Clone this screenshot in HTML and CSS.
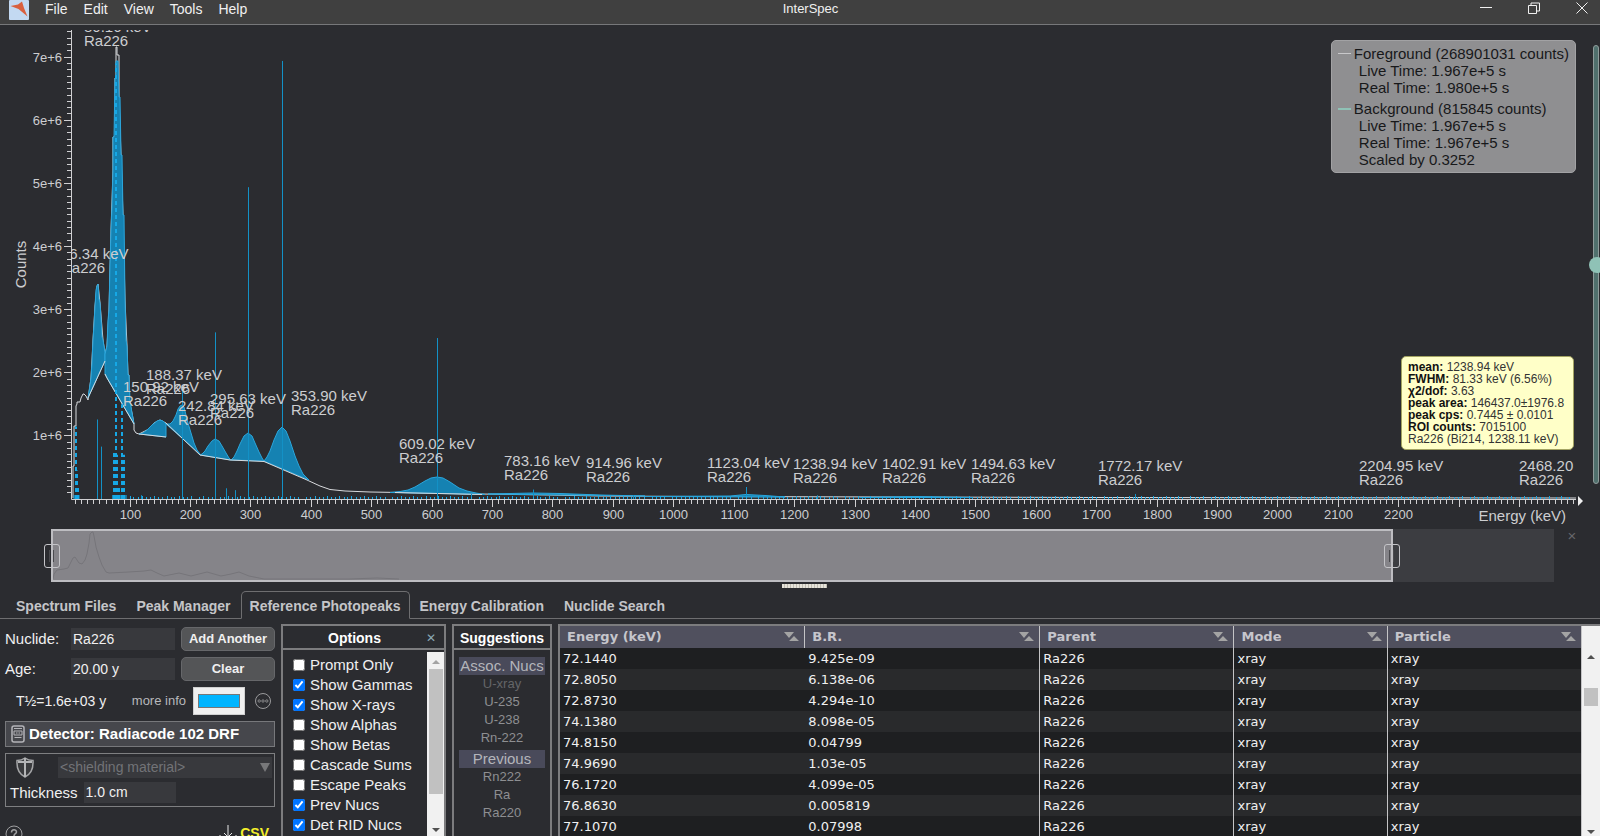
FILE: index.html
```html
<!DOCTYPE html>
<html lang="en">
  <head>
    <meta charset="UTF-8" />
    <meta name="viewport" content="width=device-width, initial-scale=1.0" />
    <title>InterSpec</title>
    <link rel="stylesheet" href="styles.css">
  </head>
  <body>
    <header class="menubar">
      <svg class="logo" viewBox="0 0 20 20" width="20" height="20">
        <rect width="20" height="20" rx="1" fill="#c3d9f2" />
        <path d="M1.500 6L9 4.500L13 1.500L15 8L18.500 16.500L9.500 9Z" fill="#d9603f" />
      </svg>
      <nav class="menu">
        <button>File</button>
        <button>Edit</button>
        <button>View</button>
        <button>Tools</button>
        <button>Help</button>
      </nav>
      <div class="app-title">InterSpec</div>
      <div class="window-buttons">
        <button aria-label="Minimize">
          <svg width="12" height="12" viewBox="0 0 12 12"><path d="M0 5.500H12" /></svg>
        </button>
        <button aria-label="Restore">
          <svg width="12" height="12" viewBox="0 0 12 12">
            <path d="M0.500 3.500H8.500V11.500H0.500ZM3 3V1H11.500V9H9" />
          </svg>
        </button>
        <button aria-label="Close">
          <svg width="12" height="12" viewBox="0 0 12 12"><path d="M0.500 0.500L11.500 11.500M11.500 0.500L0.500 11.500" /></svg>
        </button>
      </div>
    </header>

    <section class="chart">
      <svg id="axes" class="axes">
        <g id="ticks" class="ticks"></g>
        <svg id="plot">
          <svg id="data" viewBox="72 30 1504 469" preserveAspectRatio="none">
            <!-- continuum and raw spectrum -->
            <path class="spectrum" d="M73 498V466H74V426H76V406L77 404V402H80L81 398L83 394H84L86 396L88 400L91 378L93 340L95 306L97 286L98 284L100 303L103 340L105 354L107 346L109 310L111 230L113 170V137H115V78H116V47H117V55H119V97L121 155L123 215L125 300L127 346L128 375H129V400L132 413L134 424V430L136 433L139 434L147 430L154 423L160 420L166 423" />
            <path class="spectrum" d="M307 480L320 486L330 489.500L345 491L370 492L400 492.500L480 494L550 495L600 496L700 496.500L900 497L1100 497.500L1576 498" />
            <!-- fitted peaks -->
            <path class="peak" d="M88 398L91 378L92 363L93 340L94 325L95 306L96 290L97 286L98 284L99 299L100 303L101 318L102 337L103 340L105 352V361Z" />
            <path class="peak" d="M105 374V354L107 346L108 320L109 310L110 265L111 230L112 207L113 170V137H114L115 78H116V61H118L119 97H120L121 155H122L123 215H124L125 300L126 340L127 346L128 375H129L130 400L132 413L134 424L107 378Z" />
            <path class="peak" d="M139 434L143 433L147 430L152 425L157 421L160 420L163 421L166 424V437Z" />
            <path class="peak" d="M166 424H170L173 421L176 415L178 409L180 406L182 405L184 407L186 415L188 423L191 433L194 443L197 450L200 454Z" />
            <path class="peak" d="M200 455L202 454L205 451L208 446L212 441L215 439L219 441L222 446L226 453L229 458L231 460Z" />
            <path class="peak" d="M231 460L234 457L237 451L240 444L244 436L248 433L252 436L255 443L259 452L262 458L264 461Z" />
            <path class="peak" d="M264 461L267 457L270 451L274 440L278 431L282 427L286 431L290 441L295 456L299 466L303 474L309 480Z" />
            <path class="peak" d="M390 492.500L400 491.500L408 490L415 487L425 481L431 478L437 477L443 478L450 482L459 488L467 491L476 493L485 494.500Z" />
            <path class="peak" d="M488 494L533 493L560 493.500L600 495L645 496Z" />
            <path class="peak" d="M645 496.500L730 496L746 494.500L765 495.500L785 497Z" />
            <path class="peak" d="M860 497.500L917 496.500L972 497.500Z" />
            <!-- baseline under each region of interest -->
            <path class="baseline" d="M88 398L105 361M105 374L107 378L134 424M139 434L166 437M166 423L200 455L230 460L264 461.500L307 480M395 492.500L482 494.500" />
          </svg>
          <g id="lines"></g>
          <g id="labels" class="peak-labels"></g>
        </svg>
        <path id="arrow" fill="#f0f0f0" d="M0 -5L5 0L0 5Z" />
      </svg>

      <div class="legend">
        <div class="legend-item">
          <div class="legend-name"><span class="swatch"></span>Foreground (268901031 counts)</div>
          <div>Live Time: 1.967e+5 s</div>
          <div>Real Time: 1.980e+5 s</div>
        </div>
        <div class="legend-item">
          <div class="legend-name"><span class="swatch swatch-bg"></span>Background (815845 counts)</div>
          <div>Live Time: 1.967e+5 s</div>
          <div>Real Time: 1.967e+5 s</div>
          <div>Scaled by 0.3252</div>
        </div>
      </div>

      <div class="peak-info">
        <div><b>mean:</b> 1238.94 keV</div>
        <div><b>FWHM:</b> 81.33 keV (6.56%)</div>
        <div><b>χ2/dof:</b> 3.63</div>
        <div><b>peak area:</b> 146437.0±1976.8</div>
        <div><b>peak cps:</b> 0.7445 ± 0.0101</div>
        <div><b>ROI counts:</b> 7015100</div>
        <div>Ra226 (Bi214, 1238.11 keV)</div>
      </div>

      <div class="scaler"><span class="scaler-knob"></span></div>
    </section>

    <section class="overview">
      <div class="overview-track">
        <div class="overview-window">
          <svg width="400" height="49" viewBox="54 532 400 49">
            <path d="M54 580L55 575L58 571L65 570L69 569L72 563L74 559L76 558L78 561L80 564L83 565L86 561L88 555L90 544L91 535L93 533L94 533L95 537L97 548L100 558L103 566L107 573L110 574L130 573L145 572L152 571L158 574L165 577L180 574L192 577L208 573L222 577L232 575L240 573L250 577L265 580L350 580L378 579L400 580" />
          </svg>
          <span class="handle handle-left"></span>
          <span class="handle handle-right"></span>
        </div>
      </div>
      <button class="overview-close" aria-label="Hide overview">×</button>
    </section>

    <div class="splitter"><span></span></div>

    <nav class="tabs">
      <button>Spectrum Files</button>
      <button>Peak Manager</button>
      <button class="active">Reference Photopeaks</button>
      <button>Energy Calibration</button>
      <button>Nuclide Search</button>
    </nav>

    <main class="tools">
      <form class="source">
        <div class="field">
          <label for="nuclide">Nuclide:</label>
          <input id="nuclide" type="text" value="Ra226" />
          <button type="button">Add Another</button>
        </div>
        <div class="field">
          <label for="age">Age:</label>
          <input id="age" type="text" value="20.00 y" />
          <button type="button">Clear</button>
        </div>
        <div class="half-life">
          <span class="half-life-value">T½=1.6e+03 y</span>
          <a href="#">more info</a>
          <input type="color" value="#00b5ff" aria-label="Line color" />
          <button type="button" class="more" aria-label="More options">
            <svg width="18" height="18" viewBox="0 0 18 18" fill="none" stroke="#9a9a9c">
              <circle cx="9" cy="9" r="7.500" />
              <g stroke-width="0.800">
                <circle cx="5.200" cy="9" r="1.200" />
                <circle cx="9" cy="9" r="1.200" />
                <circle cx="12.800" cy="9" r="1.200" />
              </g>
            </svg>
          </button>
        </div>
        <button type="button" class="detector">
          <svg width="14" height="18" viewBox="0 0 14 18" fill="none" stroke="#b4b4b8">
            <rect x="1" y="1" width="12" height="16" rx="2" stroke-width="1.500" />
            <path d="M3 3.500H11M3.500 12.500H10.500" />
            <path d="M3 6H11V10H3ZM5 8H6.500M7.500 8H9" />
          </svg>
          Detector: Radiacode 102 DRF
        </button>
        <div class="shielding">
          <div class="shielding-row">
            <svg width="18" height="21" viewBox="0 0 18 21">
              <path d="M9 1C11 2.500 14 3.500 17 3.500C17.500 11 15 17 9 20C3 17 0.500 11 1 3.500C4 3.500 7 2.500 9 1Z" fill="#3a3b3e" stroke="#a4a5a7" stroke-width="1.500" />
              <path d="M9 1V20M2 5H16" stroke="#b4b5b7" stroke-width="2" />
            </svg>
            <div class="select">
              <select aria-label="Shielding material">
                <option>&lt;shielding material&gt;</option>
              </select>
            </div>
          </div>
          <div class="thickness-row">
            <label for="thickness">Thickness</label>
            <input id="thickness" type="text" value="1.0 cm" />
          </div>
        </div>
        <div class="source-footer">
          <button type="button" aria-label="Help">
            <svg width="18" height="18" viewBox="0 0 18 18" fill="none" stroke="#a0a0a2">
              <circle cx="9" cy="9" r="8" />
              <path d="M6.500 7.500C6.500 4 11.500 4 11.500 7C11.500 9 9 8.500 9 11M9 12.500V14" stroke-width="1.500" />
            </svg>
          </button>
          <a class="csv" href="#">
            <svg width="18" height="18" viewBox="0 0 18 18" fill="none" stroke="#e8e8e8">
              <path d="M9 0V12M5 8L9 12L13 8M1 10V15H17V10" />
            </svg>
            CSV
          </a>
        </div>
      </form>

      <section class="panel options">
        <header>
          <h2>Options</h2>
          <button aria-label="Close options">✕</button>
        </header>
        <div class="options-body">
          <div class="checks">
            <label><input type="checkbox" />Prompt Only</label>
            <label><input type="checkbox" checked />Show Gammas</label>
            <label><input type="checkbox" checked />Show X-rays</label>
            <label><input type="checkbox" />Show Alphas</label>
            <label><input type="checkbox" />Show Betas</label>
            <label><input type="checkbox" />Cascade Sums</label>
            <label><input type="checkbox" />Escape Peaks</label>
            <label><input type="checkbox" checked />Prev Nucs</label>
            <label><input type="checkbox" checked />Det RID Nucs</label>
          </div>
          <div class="scrollbar options-scroll">
            <span class="arrow-up dim"></span>
            <span class="thumb"></span>
            <span class="arrow-down"></span>
          </div>
        </div>
      </section>

      <section class="panel suggestions">
        <header><h2>Suggestions</h2></header>
        <div class="nuclides">
          <h3>Assoc. Nucs</h3>
          <a href="#" class="faint">U-xray</a>
          <a href="#">U-235</a>
          <a href="#">U-238</a>
          <a href="#">Rn-222</a>
          <h3>Previous</h3>
          <a href="#">Rn222</a>
          <a href="#">Ra</a>
          <a href="#">Ra220</a>
        </div>
      </section>

      <section class="lines-view">
        <table>
          <colgroup>
            <col class="col-energy" />
            <col class="col-br" />
            <col class="col-parent" />
            <col class="col-mode" />
            <col class="col-particle" />
          </colgroup>
          <thead>
            <tr>
              <th>Energy (keV)</th>
              <th>B.R.</th>
              <th>Parent</th>
              <th>Mode</th>
              <th>Particle</th>
            </tr>
          </thead>
          <tbody>
            <tr><td>72.1440</td><td>9.425e-09</td><td>Ra226</td><td>xray</td><td>xray</td></tr>
            <tr><td>72.8050</td><td>6.138e-06</td><td>Ra226</td><td>xray</td><td>xray</td></tr>
            <tr><td>72.8730</td><td>4.294e-10</td><td>Ra226</td><td>xray</td><td>xray</td></tr>
            <tr><td>74.1380</td><td>8.098e-05</td><td>Ra226</td><td>xray</td><td>xray</td></tr>
            <tr><td>74.8150</td><td>0.04799</td><td>Ra226</td><td>xray</td><td>xray</td></tr>
            <tr><td>74.9690</td><td>1.03e-05</td><td>Ra226</td><td>xray</td><td>xray</td></tr>
            <tr><td>76.1720</td><td>4.099e-05</td><td>Ra226</td><td>xray</td><td>xray</td></tr>
            <tr><td>76.8630</td><td>0.005819</td><td>Ra226</td><td>xray</td><td>xray</td></tr>
            <tr><td>77.1070</td><td>0.07998</td><td>Ra226</td><td>xray</td><td>xray</td></tr>
          </tbody>
        </table>
        <div class="scrollbar table-scroll">
          <span class="arrow-up"></span>
          <span class="thumb"></span>
          <span class="arrow-down"></span>
        </div>
      </section>
    </main>

    <script src="chart.js"></script>
  </body>
</html>
```
FILE: styles.css
```css
* {
  box-sizing: border-box;
}

body {
  margin: 0;
  height: 100vh;
  overflow: hidden;
  display: flex;
  flex-direction: column;
  background-color: #2b2c30;
  color: #f0f0f0;
  font-family: "Liberation Sans", Arial, sans-serif;
  font-size: 15px;
}

button {
  font: inherit;
  color: inherit;
  background: none;
  border: none;
  padding: 0;
  cursor: pointer;
}

a {
  color: inherit;
  text-decoration: none;
}

/* Menu bar */
.menubar {
  display: flex;
  height: 25px;
  flex: none;
  background-color: #404040;
  border-bottom: 1px solid #77787a;
  padding-left: 9px;
}

.menu {
  display: flex;
  flex: 1 0 0;
  gap: 16px;
  padding-left: 16px;
  height: 18px;
}

.menu button {
  font-size: 14px;
}

.app-title {
  font-size: 13px;
  line-height: 18px;
}

.window-buttons {
  display: flex;
  flex: 1 0 24px;
  justify-content: flex-end;
  gap: 36px;
  padding-right: 12px;
  height: 16px;
}

.window-buttons svg {
  display: block;
  fill: none;
  stroke: #f0f0f0;
}

/* Spectrum chart */
.chart {
  position: relative;
  flex: 0 0 60vh;
}

.axes {
  display: block;
  width: 100%;
  height: 100%;
}

.ticks path {
  stroke: #d0d0d2;
  fill: none;
}

.ticks text {
  fill: #cdced0;
  font-size: 13px;
}

.ticks .axis-title,
.peak-labels text {
  fill: #cdced0;
  font-size: 15px;
}

#data path {
  vector-effect: non-scaling-stroke;
}

.spectrum,
.baseline {
  fill: none;
  stroke: #d8dadd;
}

.peak {
  fill: #1582b2;
  stroke: #2aa6dc;
}

.gamma {
  stroke: #1391c6;
}

.xray {
  stroke: #16a8e6;
  stroke-width: 2;
  stroke-dasharray: 4 3;
}

.weak {
  stroke: #16a8e6;
}

.legend {
  position: absolute;
  top: 15px;
  right: 24px;
  padding: 4px 6px;
  background-color: #8f8f91;
  border: 1px solid #a2a2a4;
  border-radius: 5px;
  color: #17181a;
  line-height: 17px;
}

.legend-item {
  padding-left: 21px;
}

.legend-item + .legend-item {
  margin-top: 4px;
}

.legend-name {
  display: flex;
  align-items: center;
  margin-left: -21px;
}

.swatch {
  width: 13px;
  height: 1px;
  margin-right: 3px;
  background-color: #c8c8ca;
}

.swatch-bg {
  height: 2px;
  background-color: #8fc2b6;
}

.peak-info {
  position: absolute;
  right: 26px;
  bottom: 77px;
  width: 173px;
  padding: 4px 6px;
  background-color: #ffffc8;
  border: 1px solid #a3a362;
  border-radius: 5px;
  color: #333;
  font-size: 12px;
  line-height: 12px;
}

.peak-info b {
  color: #111;
}

.scaler {
  position: absolute;
  top: 20px;
  right: 1px;
  bottom: 43px;
  width: 6px;
  background-color: #50706d;
  border: 1px solid #8f9c9b;
  border-radius: 3px;
}

.scaler-knob {
  position: absolute;
  top: 50%;
  left: -5px;
  width: 16px;
  height: 16px;
  margin-top: -7px;
  border-radius: 50%;
  background-color: #8fc2b6;
}

/* Overview strip */
.overview {
  display: flex;
  flex: none;
  align-items: flex-start;
  padding: 2px 20px 0 51px;
}

.overview-track {
  flex: 1;
  height: 53px;
  background-color: #3c3d41;
}

.overview-window {
  position: relative;
  width: 89.3%;
  height: 53px;
  background-color: #858489;
  border: 2px solid #bdbdc1;
}

.overview-window svg {
  display: block;
  fill: none;
  stroke: #76757a;
}

.handle {
  position: absolute;
  top: 13px;
  width: 16px;
  height: 24px;
  border: 1px solid #c4c4c8;
  border-radius: 3px;
  background: linear-gradient(90deg, transparent 4px, #4a4a4e 4px 5px, transparent 5px 8px, #4a4a4e 8px 9px, transparent 9px) no-repeat 0 5px / 100% 12px;
}

.handle-left {
  left: -9px;
}

.handle-right {
  right: -9px;
}

.overview-close {
  width: 26px;
  padding-left: 10px;
  color: #66676b;
  line-height: 14px;
}

/* Splitter */
.splitter {
  flex: none;
  height: 9px;
  padding: 2px 0 0 8px;
}

.splitter span {
  display: block;
  width: 45px;
  height: 4px;
  margin: 0 auto;
  background: repeating-linear-gradient(90deg, #e6e3da 0 2px, #bfbcb2 2px 3px);
}

/* Tabs */
.tabs {
  display: flex;
  flex: none;
  height: 28px;
}

.tabs::before,
.tabs::after {
  content: "";
  width: 6px;
  border-bottom: 1px solid #6e6e70;
}

.tabs::after {
  flex: 1;
}

.tabs button {
  padding: 3px 10px 0;
  border-bottom: 1px solid #6e6e70;
  color: #c4c5c8;
  font-size: 14px;
  font-weight: bold;
}

.tabs .active {
  padding: 3px 8px 0;
  border: 1px solid #6e6e70;
  border-bottom-color: transparent;
  border-radius: 5px 5px 0 0;
}

/* Tool area */
.tools {
  display: flex;
  flex: 1;
  min-height: 0;
  gap: 6px;
  padding: 5px 0 0 5px;
}

.source {
  display: flex;
  flex-direction: column;
  flex: 0 0 270px;
  gap: 6px;
  padding-top: 3px;
}

.source input[type="text"] {
  width: 100%;
  min-width: 0;
  padding: 0 2px;
  border: none;
  background-color: #38393d;
  color: #f0f0f0;
  font: inherit;
  font-size: 14px;
}

.field {
  display: grid;
  grid-template-columns: 60px 1fr 94px;
  gap: 6px;
  align-items: center;
  height: 24px;
}

.field input[type="text"] {
  height: 22px;
}

.field button {
  height: 24px;
  border: 1px solid #66676a;
  border-radius: 5px;
  background-color: #545557;
  font-size: 13px;
  font-weight: bold;
}

.half-life {
  display: flex;
  align-items: center;
  height: 28px;
  padding-left: 11px;
}

.half-life-value {
  flex: 1;
  font-size: 14px;
}

.half-life a {
  color: #b8b9bc;
  font-size: 13px;
}

.half-life input[type="color"] {
  width: 52px;
  height: 28px;
  margin: 0 9px 0 7px;
  padding: 2px;
  border: 1px solid #d0d0d0;
  background-color: #f0f0f0;
}

.more {
  height: 18px;
  margin-right: 3px;
}

.more svg {
  display: block;
}

.detector {
  display: flex;
  flex: none;
  align-items: center;
  gap: 4px;
  height: 26px;
  padding-left: 5px;
  border: 1px solid #77787b;
  background-color: #46474c;
  color: #fff;
  font-weight: bold;
}

.shielding {
  height: 56px;
  padding: 3px 2px 3px 4px;
  border: 1px solid #7e7f81;
}

.shielding-row {
  display: flex;
  align-items: center;
  gap: 24px;
  height: 21px;
  margin-bottom: 4px;
  padding-left: 6px;
}

.select {
  position: relative;
  flex: 1;
}

.select::after {
  content: "";
  position: absolute;
  right: 2px;
  top: 6px;
  border: 5px solid transparent;
  border-top: 9px solid #77787a;
  border-bottom: none;
}

.select select {
  display: block;
  width: 100%;
  height: 21px;
  padding: 0 2px;
  appearance: none;
  border: none;
  background-color: #38393d;
  color: #727377;
  font: inherit;
  font-size: 14px;
}

.thickness-row {
  display: flex;
  align-items: center;
  gap: 6px;
}

.thickness-row input[type="text"] {
  width: 92px;
  height: 21px;
}

.source-footer {
  display: flex;
  justify-content: space-between;
  padding: 12px 6px 0 0;
}

.csv {
  display: flex;
  gap: 3px;
  color: #f5f02a;
  font-size: 14px;
  font-weight: bold;
}

/* Bordered panels */
.panel {
  border: 2px solid #7c7c7e;
  border-bottom: none;
  overflow: hidden;
}

.panel header {
  display: flex;
  align-items: center;
  height: 24px;
  padding-top: 2px;
  border-bottom: 2px solid #7c7c7e;
}

.panel h2 {
  flex: 1;
  margin: 0;
  color: #fff;
  font-size: 14px;
  text-align: center;
}

.options {
  flex: 0 0 165px;
}

.options header {
  padding-right: 8px;
}

.options header button {
  color: #8aa7b5;
  font-size: 12px;
}

.options-body {
  display: flex;
  height: 100%;
}

.checks {
  flex: 1;
  padding: 5px 0 0 10px;
}

.checks label {
  display: flex;
  align-items: center;
  gap: 5px;
  height: 20px;
  white-space: nowrap;
}

.checks input {
  width: 12px;
  height: 12px;
  margin: 0;
}

.scrollbar {
  display: flex;
  flex-direction: column;
  align-items: center;
  flex: 0 0 17px;
  background-color: #f1f1f1;
}

.scrollbar .thumb {
  width: 14px;
  background-color: #c1c1c1;
}

.arrow-up,
.arrow-down {
  border: 4px solid transparent;
}

.arrow-up {
  border-top: none;
  border-bottom-color: #505050;
}

.arrow-down {
  border-bottom: none;
  border-top-color: #505050;
}

.dim {
  border-bottom-color: #a3a3a3;
}

.options-scroll {
  height: 184px;
  margin-top: 2px;
  padding: 8px 0 4px;
}

.options-scroll .thumb {
  height: 125px;
  margin: 5px 0 34px;
}

.suggestions {
  flex: 0 0 100px;
  text-align: center;
}

.nuclides {
  padding: 4px 5px 0;
}

.nuclides h3 {
  margin: 3px 0 0;
  background-color: #494a5a;
  color: #b4b5ba;
  font-size: 15px;
  font-weight: normal;
  line-height: 18px;
}

.nuclides a {
  display: block;
  color: #8e8f92;
  font-size: 13px;
  line-height: 18px;
}

.nuclides .faint {
  color: #646568;
}

/* Line table */
.lines-view {
  display: flex;
  flex: 1;
  align-items: stretch;
  min-width: 0;
  overflow: hidden;
  border: 2px solid #7c7c7e;
  border-width: 2px 0 0 2px;
}

.lines-view table {
  flex: 1;
  width: 100%;
  height: 0;
  table-layout: fixed;
  border-collapse: separate;
  border-spacing: 0;
  font-family: "DejaVu Sans", Verdana, sans-serif;
  font-size: 13px;
}

.col-energy {
  width: 24%;
}

.col-br {
  width: 23%;
}

.col-parent {
  width: 19%;
}

.col-mode {
  width: 15%;
}

.col-particle {
  width: 19%;
}

.lines-view th,
.lines-view td {
  height: 21px;
  padding: 0 0 0 3px;
  border-right: 1px solid #c4c4c6;
  text-align: left;
  line-height: 21px;
}

.lines-view th {
  height: 22px;
  padding-left: 7px;
  background: #50505e url("data:image/svg+xml,%3Csvg xmlns='http://www.w3.org/2000/svg' width='15' height='10'%3E%3Cpath d='M0 0H10L5 6ZM5 9L10 4L15 9Z' fill='%23a4a4a4'/%3E%3C/svg%3E") no-repeat right 5px center;
  color: #c6c6cc;
  line-height: 22px;
}

.lines-view td:first-child {
  border-right-color: transparent;
}

.lines-view tbody tr:nth-child(odd) {
  background-color: #1e1f21;
}

.lines-view tbody tr:nth-child(even) {
  background-color: #292a2c;
}

.table-scroll {
  flex-basis: 18px;
  padding: 29px 0 2px;
}

.table-scroll .thumb {
  height: 18px;
  margin: 29px 0 auto;
}
```
FILE: chart.js
```js
const NS = "http://www.w3.org/2000/svg";
const LEFT = 72;
const RIGHT = 24;
const TOP = 5;
const BOTTOM = 28;
const E_MIN = 4.5;
const E_MAX = 2494.5;
const COUNTS_MAX = 7.43e6;

const svg = document.getElementById("axes");
const ticks = document.getElementById("ticks");
const plot = document.getElementById("plot");
const lines = document.getElementById("lines");
const labels = document.getElementById("labels");

// energy, offset of the text from the peak, counts at the text baseline
const peaks = [
  ["80.16", -34, 7.4e6],
  ["46.34", -36, 3.8e6],
  ["150.92", -37, 1.69e6],
  ["188.37", -37, 1.89e6],
  ["242.84", -38, 1.39e6],
  ["295.63", -38, 1.5e6],
  ["353.90", 8, 1.55e6],
  ["609.02", -38, 0.79e6],
  ["783.16", -38, 0.52e6],
  ["914.96", -36, 0.49e6],
  ["1123.04", -41, 0.49e6],
  ["1238.94", -25, 0.47e6],
  ["1402.91", -35, 0.47e6],
  ["1494.63", -1, 0.47e6],
  ["1772.17", -42, 0.45e6],
  ["2204.95", -42, 0.44e6],
  ["2468.20", -41, 0.44e6],
];

// energy, relative height
const gammas = [
  [46.5, 1.26e6], [53.2, 0.83e6], [118, 0.06e6], [186.2, 1.8e6],
  [242, 2.64e6], [258.9, 0.17e6], [274.8, 0.14e6], [295.2, 4.94e6],
  [351.9, 6.94e6], [609.3, 2.55e6], [665, 0.08e6], [768.4, 0.15e6],
  [934, 0.06e6], [1120.3, 0.19e6], [1238, 0.06e6], [1764.5, 0.08e6],
];

const xrays = [
  [10.8, 1.15e6], [13, 0.45e6], [15, 0.2e6], [74.8, 0.75e6],
  [77.1, 6.9e6], [79.5, 0.7e6], [83, 0.2e6], [87.3, 1.5e6], [90, 0.7e6],
];

function add(parent, name, attrs, text) {
  const el = document.createElementNS(NS, name);
  for (const key in attrs) el.setAttribute(key, attrs[key]);
  if (text) el.textContent = text;
  parent.appendChild(el);
  return el;
}

function draw() {
  const w = svg.clientWidth;
  const h = svg.clientHeight;
  const pw = w - LEFT - RIGHT;
  const ph = h - TOP - BOTTOM;
  const x = (e) => ((e - E_MIN) / (E_MAX - E_MIN)) * pw;
  const y = (c) => ph - (c / COUNTS_MAX) * ph;

  ticks.replaceChildren();
  lines.replaceChildren();
  labels.replaceChildren();

  for (const [key, value] of [["x", LEFT], ["y", TOP], ["width", pw], ["height", ph]]) {
    plot.setAttribute(key, value);
  }

  // axes
  let d = `M${LEFT - 0.5} ${TOP}V${TOP + ph + 0.5}H${w - RIGHT}`;
  for (let i = 1; i <= 74; i++) {
    const py = Math.floor(TOP + y(i * 1e5)) + 0.5;
    d += `M${LEFT - (i % 10 ? 5 : 8)} ${py}H${LEFT}`;
    if (i % 10 === 0) {
      add(ticks, "text", { x: LEFT - 10, y: py + 4, "text-anchor": "end" }, `${i / 10}e+6`);
    }
  }
  for (let e = 10; e < E_MAX; e += 10) {
    const px = Math.round(LEFT + x(e)) + 0.5;
    d += `M${px} ${TOP + ph}v${e % 100 ? 5 : 8}`;
    if (e % 100 === 0 && e <= 2200) {
      add(ticks, "text", { x: px, y: h - 8, "text-anchor": "middle" }, e);
    }
  }
  add(ticks, "path", { d });
  add(ticks, "text", { class: "axis-title", x: w - 34, y: h - 6, "text-anchor": "end" }, "Energy (keV)");
  add(ticks, "text", {
    class: "axis-title",
    transform: `translate(26 ${TOP + ph / 2}) rotate(-90)`,
    "text-anchor": "middle",
  }, "Counts");
  document.getElementById("arrow").setAttribute("transform", `translate(${w - 22} ${TOP + ph + 2})`);

  // reference lines
  for (const [e, c] of xrays) {
    const px = Math.round(x(e));
    add(lines, "path", { class: "xray", d: `M${px} ${ph}V${y(c)}` });
  }
  for (const [e, c] of gammas) {
    const px = Math.round(x(e)) + 0.5;
    add(lines, "path", { class: "gamma", d: `M${px} ${ph}V${y(c)}` });
  }
  let weak = "";
  for (let i = 0; i < 330; i++) {
    const e = 100 + ((i * 7919) % 2390);
    weak += `M${Math.round(x(e)) + 0.5} ${ph}v${i % 3 ? -2 : -3}`;
  }
  for (let e = 8; e < 96; e += 2) {
    if (e < 17 || e > 71) weak += `M${x(e)} ${ph}v-4`;
  }
  add(lines, "path", { class: "weak", d: weak });

  // peak labels
  for (const [e, dx, c] of peaks) {
    const px = Math.round(x(Number(e)) + dx);
    const py = Math.round(y(c));
    add(labels, "text", { x: px, y: py }, `${e} keV`);
    add(labels, "text", { x: px, y: py + 14 }, "Ra226");
  }
}

draw();
window.addEventListener("resize", draw);
```
